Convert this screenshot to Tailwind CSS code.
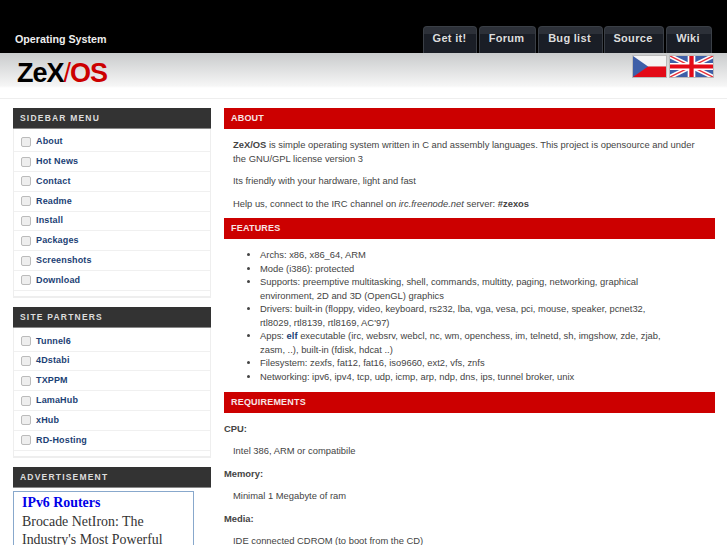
<!DOCTYPE html>
<html lang="en">
<head>
    <meta charset="UTF-8">
    <title>ZeX/OS</title>
    <script src="https://cdn.jsdelivr.net/npm/@tailwindcss/browser@4"></script>
</head>
<body class="h-[545px] overflow-hidden bg-white font-['Liberation_Sans',Arial,sans-serif] text-[9.4px] text-[#444]">

    <header class="h-[53px] bg-black flex items-end justify-between pl-[15px] pr-[15px]">
        <div class="text-[10.7px] font-bold text-[#eee] pb-[6px]">Operating System</div>
        <nav class="flex text-[11px] font-bold tracking-[0.3px] text-[#ddd]">
            <a class="h-[27px] w-[54px] mr-[2px] flex items-center justify-center rounded-t-sm border border-b-0 border-[#3a3f46] bg-[linear-gradient(#2c3038_0,#2c3038_28%,#1a1e26_28%)] pb-[3px] pr-px">Get it!</a>
            <a class="h-[27px] w-[57px] mr-[2px] flex items-center justify-center rounded-t-sm border border-b-0 border-[#3a3f46] bg-[linear-gradient(#2c3038_0,#2c3038_28%,#1a1e26_28%)] pb-[3px] pr-[2px]">Forum</a>
            <a class="h-[27px] w-[65px] mr-px flex items-center justify-center rounded-t-sm border border-b-0 border-[#3a3f46] bg-[linear-gradient(#2c3038_0,#2c3038_28%,#1a1e26_28%)] pb-[3px] pr-[2px]">Bug list</a>
            <a class="h-[27px] w-[60px] mr-[2px] flex items-center justify-center rounded-t-sm border border-b-0 border-[#3a3f46] bg-[linear-gradient(#2c3038_0,#2c3038_28%,#1a1e26_28%)] pb-[3px] pr-[2px]">Source</a>
            <a class="h-[27px] w-[46px] flex items-center justify-center rounded-t-sm border border-b-0 border-[#3a3f46] bg-[linear-gradient(#2c3038_0,#2c3038_28%,#1a1e26_28%)] pb-[3px] pr-[2px]">Wiki</a>
        </nav>
    </header>

    <div class="h-[46px] border-b border-[#eee] bg-[linear-gradient(#c9cbcc_0,#f6f6f6_33px,#fff_35px)] flex justify-between pl-[17px] pr-[13px]">
        <div class="text-[27px] leading-[30px] pt-[5px] font-bold tracking-[-1px] text-black">ZeX<span class="font-normal text-[#c00]">/</span><span class="text-[#c00]">OS</span></div>
        <div class="flex gap-[2px] pt-[2px] h-[25px]">
            <svg width="33" height="21" viewBox="0 0 35 24" preserveAspectRatio="none" class="border border-[#bbb] box-content">
                <rect width="35" height="12" fill="#f4f4f4"/><rect y="12" width="35" height="12" fill="#e30a17"/><path d="M0 0L16 12L0 24Z" fill="#3e5fa8"/>
            </svg>
            <svg width="43" height="21" viewBox="0 0 45 24" preserveAspectRatio="none" class="border border-[#bbb] box-content">
                <rect width="45" height="24" fill="#3e5fa8"/>
                <path d="M0 0L45 24M45 0L0 24" stroke="#fff" stroke-width="5"/>
                <path d="M0 0L45 24M45 0L0 24" stroke="#e8303a" stroke-width="1.6"/>
                <path d="M22.5 0V24M0 12H45" stroke="#fff" stroke-width="8"/>
                <path d="M22.5 0V24M0 12H45" stroke="#e30a17" stroke-width="4.5"/>
            </svg>
        </div>
    </div>

    <div class="flex gap-[13px] pl-[13px] pr-[12px] pt-[9px]">
        <aside class="w-[198px] shrink-0 flex flex-col gap-[9px]">
            <section>
                <h3 class="h-[21px] flex items-center pl-[7px] bg-[#333] border-b border-[#888] text-[8.5px] font-bold tracking-[1.2px] text-[#ddd]">SIDEBAR MENU</h3>
                <ul class="border-x-[1px] border-b-[2px] border-[#eee] pt-[3.5px] pb-[5.5px] font-bold text-[9px] tracking-[0.15px] text-[#1c3f75]">
                    <li class="h-[19.8px] flex items-center gap-[5px] pl-[7px] border-b border-[#f0f0f0]"><span class="w-[10px] h-[10px] rounded-[2px] border border-[#bbb] bg-[#eee]"></span>About</li>
                    <li class="h-[19.8px] flex items-center gap-[5px] pl-[7px] border-b border-[#f0f0f0]"><span class="w-[10px] h-[10px] rounded-[2px] border border-[#bbb] bg-[#eee]"></span>Hot News</li>
                    <li class="h-[19.8px] flex items-center gap-[5px] pl-[7px] border-b border-[#f0f0f0]"><span class="w-[10px] h-[10px] rounded-[2px] border border-[#bbb] bg-[#eee]"></span>Contact</li>
                    <li class="h-[19.8px] flex items-center gap-[5px] pl-[7px] border-b border-[#f0f0f0]"><span class="w-[10px] h-[10px] rounded-[2px] border border-[#bbb] bg-[#eee]"></span>Readme</li>
                    <li class="h-[19.8px] flex items-center gap-[5px] pl-[7px] border-b border-[#f0f0f0]"><span class="w-[10px] h-[10px] rounded-[2px] border border-[#bbb] bg-[#eee]"></span>Install</li>
                    <li class="h-[19.8px] flex items-center gap-[5px] pl-[7px] border-b border-[#f0f0f0]"><span class="w-[10px] h-[10px] rounded-[2px] border border-[#bbb] bg-[#eee]"></span>Packages</li>
                    <li class="h-[19.8px] flex items-center gap-[5px] pl-[7px] border-b border-[#f0f0f0]"><span class="w-[10px] h-[10px] rounded-[2px] border border-[#bbb] bg-[#eee]"></span>Screenshots</li>
                    <li class="h-[19.8px] flex items-center gap-[5px] pl-[7px] border-b border-[#f0f0f0]"><span class="w-[10px] h-[10px] rounded-[2px] border border-[#bbb] bg-[#eee]"></span>Download</li>
                </ul>
            </section>
            <section>
                <h3 class="h-[21px] flex items-center pl-[7px] bg-[#333] border-b border-[#888] text-[8.5px] font-bold tracking-[1.2px] text-[#ddd]">SITE PARTNERS</h3>
                <ul class="border-x-[1px] border-b-[2px] border-[#eee] pt-[3.5px] pb-[5.5px] font-bold text-[9px] tracking-[0.15px] text-[#1c3f75]">
                    <li class="h-[19.8px] flex items-center gap-[5px] pl-[7px] border-b border-[#f0f0f0]"><span class="w-[10px] h-[10px] rounded-[2px] border border-[#bbb] bg-[#eee]"></span>Tunnel6</li>
                    <li class="h-[19.8px] flex items-center gap-[5px] pl-[7px] border-b border-[#f0f0f0]"><span class="w-[10px] h-[10px] rounded-[2px] border border-[#bbb] bg-[#eee]"></span>4Dstabi</li>
                    <li class="h-[19.8px] flex items-center gap-[5px] pl-[7px] border-b border-[#f0f0f0]"><span class="w-[10px] h-[10px] rounded-[2px] border border-[#bbb] bg-[#eee]"></span>TXPPM</li>
                    <li class="h-[19.8px] flex items-center gap-[5px] pl-[7px] border-b border-[#f0f0f0]"><span class="w-[10px] h-[10px] rounded-[2px] border border-[#bbb] bg-[#eee]"></span>LamaHub</li>
                    <li class="h-[19.8px] flex items-center gap-[5px] pl-[7px] border-b border-[#f0f0f0]"><span class="w-[10px] h-[10px] rounded-[2px] border border-[#bbb] bg-[#eee]"></span>xHub</li>
                    <li class="h-[19.8px] flex items-center gap-[5px] pl-[7px] border-b border-[#f0f0f0]"><span class="w-[10px] h-[10px] rounded-[2px] border border-[#bbb] bg-[#eee]"></span>RD-Hosting</li>
                </ul>
            </section>
            <section>
                <h3 class="h-[21px] flex items-center pl-[7px] bg-[#333] border-b border-[#888] text-[8.5px] font-bold tracking-[1.2px] text-[#ddd]">ADVERTISEMENT</h3>
                <div class="mt-[3px] w-[181px] h-[100px] border border-[#88a8cc] pl-[8px] pt-[2px] font-['Liberation_Serif',serif] text-[13.9px] leading-[18.5px] text-[#333]">
                    <div class="font-bold text-[#0000e8]">IPv6 Routers</div>
                    <p>Brocade NetIron: The Industry's Most Powerful</p>
                </div>
            </section>
        </aside>

        <main class="w-[491px] leading-[13.5px]">
            <h2 class="h-[21px] flex items-center pl-[7px] bg-[#c00] text-[9px] font-bold tracking-[0.2px] text-[#f8e6e6]">ABOUT</h2>
            <div class="px-[9px] pt-[9px] flex flex-col gap-[9px]">
                <p><b>ZeX/OS</b> is simple operating system written in C and assembly languages. This project is opensource and under the GNU/GPL license version 3</p>
                <p>Its friendly with your hardware, light and fast</p>
                <p>Help us, connect to the IRC channel on <i>irc.freenode.net</i> server: <b>#zexos</b></p>
            </div>

            <h2 class="mt-[8px] h-[21px] flex items-center pl-[7px] bg-[#c00] text-[9px] font-bold tracking-[0.2px] text-[#f8e6e6]">FEATURES</h2>
            <ul class="list-disc pl-[36px] pr-[40px] pt-[9px]">
                <li>Archs: x86, x86_64, ARM</li>
                <li>Mode (i386): protected</li>
                <li>Supports: preemptive multitasking, shell, commands, multitty, paging, networking, graphical environment, 2D and 3D (OpenGL) graphics</li>
                <li>Drivers: built-in (floppy, video, keyboard, rs232, lba, vga, vesa, pci, mouse, speaker, pcnet32, rtl8029, rtl8139, rtl8169, AC'97)</li>
                <li>Apps: <b class="text-[#1c3f75]">elf</b> executable (irc, websrv, webcl, nc, wm, openchess, im, telnetd, sh, imgshow, zde, zjab, zasm, ..), built-in (fdisk, hdcat ..)</li>
                <li>Filesystem: zexfs, fat12, fat16, iso9660, ext2, vfs, znfs</li>
                <li>Networking: ipv6, ipv4, tcp, udp, icmp, arp, ndp, dns, ips, tunnel broker, unix</li>
            </ul>

            <h2 class="mt-[9px] h-[21px] flex items-center pl-[7px] bg-[#c00] text-[9px] font-bold tracking-[0.2px] text-[#f8e6e6]">REQUIREMENTS</h2>
            <div class="pt-[8.5px] flex flex-col gap-[9px]">
                <b>CPU:</b>
                <p class="pl-[9px]">Intel 386, ARM or compatibile</p>
                <b>Memory:</b>
                <p class="pl-[9px]">Minimal 1 Megabyte of ram</p>
                <b>Media:</b>
                <p class="pl-[9px]">IDE connected CDROM (to boot from the CD)</p>
            </div>
        </main>
    </div>

</body>
</html>
